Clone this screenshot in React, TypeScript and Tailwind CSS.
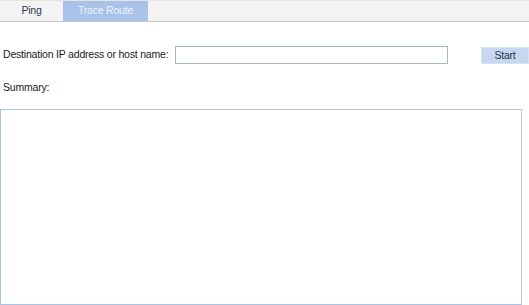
export default function App() {
  return (
    <div className="w-[529px] h-[305px] bg-white overflow-hidden text-[10.5px] tracking-[-0.2px] text-[#1a1a1a]" style={{ fontFamily: '"Liberation Sans", Arial, sans-serif' }}>
      {/* Tabs */}
      <div className="flex h-[22px] bg-[#f3f3f3] border-t border-[#e4e4e4] border-b border-b-[#c9c9c9]">
        <div className="w-[63px] flex items-center justify-center text-[#2a3a55]">Ping</div>
        <div className="w-[85px] flex items-center justify-center bg-[#a9c3e8] text-[#eef4fc]">Trace Route</div>
      </div>

      {/* Destination row */}
      <div className="flex items-center mt-[24px] h-[18px]">
        <span className="ml-[3px] w-[172px] shrink-0 whitespace-nowrap">Destination IP address or host name:</span>
        <input className="shrink-0 w-[273px] h-[18px] border border-[#a6b7cc] bg-white outline-none" />
        <button className="shrink-0 ml-[33px] w-[48px] h-[17px] bg-[#c7d7f0] border border-[#d6e1f3] text-[#26344d] text-[10.5px]">Start</button>
      </div>

      <div className="ml-[3px] mt-[17px] leading-[13px]">Summary:</div>

      <textarea className="block mt-[15px] w-[522px] h-[196px] border border-[#a9c4e8] border-r-[#c4cbd6] outline-none resize-none" />
    </div>
  );
}
